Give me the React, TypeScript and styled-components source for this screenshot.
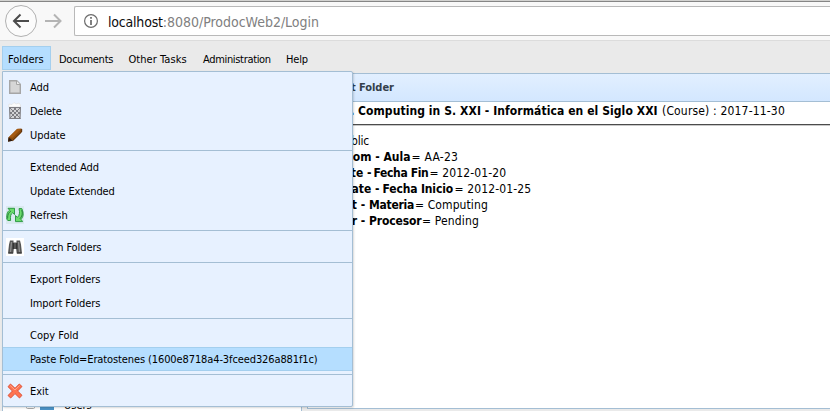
import React from "react";
import styled, { createGlobalStyle } from "styled-components";

const Global = createGlobalStyle`
  * { box-sizing: border-box; }
  body { margin: 0; background: #eaeaea; overflow: hidden; }
`;

const Page = styled.div`
  position: relative;
  display: flex;
  flex-direction: column;
  height: 411px;
  overflow: hidden;
  background: #eaeaea;
  color: #000;
  font-family: "DejaVu Sans Condensed", "DejaVu Sans", sans-serif;
  font-size: 11px;
  white-space: pre;
`;

const BrowserBar = styled.header`
  display: flex;
  flex: none;
  align-items: flex-start;
  height: 41px;
  padding-left: 4px;
  border-top: 1px solid #d2d2d0;
  border-bottom: 1px solid #dcdcdc;
  background: #f8f8f8;
  box-shadow: inset 0 1px #858585;
`;

const NavIcons = styled.svg`
  flex: none;
  width: 70px;
  height: 39px;
`;

const AddressField = styled.div`
  display: flex;
  flex: 1;
  align-items: center;
  height: 30px;
  margin-top: 5px;
  padding: 2px 0 0 8px;
  border: 1px solid #b9b9b9;
  border-right: 0;
  border-radius: 2px 0 0 2px;
  background: #fff;
  color: #808080;
  font-size: 14px;
`;

const InfoIcon = styled.svg`
  width: 16px;
  height: 16px;
  margin: -2px 9px 0 0;
`;

const Host = styled.span`
  color: #0c0c0d;
  letter-spacing: -0.2px;
`;

const UrlRest = styled.span`
  letter-spacing: -0.02px;
`;

const MenuBar = styled.nav`
  display: flex;
  flex: none;
  align-items: flex-start;
  gap: 2px;
  height: 32px;
  padding: 5px 0 0 2px;
`;

const MenuTitle = styled.div<{ $width: number; $track?: number; $open?: boolean }>`
  width: ${(p) => p.$width}px;
  height: 24px;
  padding-left: 5px;
  border: 1px solid ${(p) => (p.$open ? "#a4cfee" : "transparent")};
  background: ${(p) => (p.$open ? "#b5deff" : "transparent")};
  line-height: 25px;
  letter-spacing: ${(p) => p.$track ?? 0}px;
`;

const Workspace = styled.div`
  display: flex;
  flex: 1;
  gap: 5px;
  min-height: 0;
`;

const TreePanel = styled.aside`
  display: flex;
  align-items: flex-end;
  width: 300px;
  margin-left: 2px;
  padding: 0 0 0 22px;
  border: 1px solid #a4bed4;
  border-bottom: 0;
  background: #fff;
`;

const TreeRow = styled.div`
  display: flex;
  align-items: center;
  height: 14px;
  margin-bottom: -2px;
  line-height: 14px;
`;

const TreeIcons = styled.svg`
  width: 39px;
  height: 14px;
`;

const DetailPanel = styled.main`
  flex: 1;
  height: 336px;
  border: 1px solid #a4bed4;
  border-right: 0;
  background: #fff;
`;

const PanelHeader = styled.h1`
  display: flex;
  height: 28px;
  margin: 0;
  border-bottom: 1px solid #a4bed4;
  background: linear-gradient(#e2efff, #d3e7ff);
  color: #34404b;
  font-size: 11px;
  line-height: 28px;
  letter-spacing: -0.05px;
`;

const Line = styled.div`
  display: flex;
  height: 16px;
  font-size: 12px;
  line-height: 16px;
`;

const Summary = styled(Line)`
  height: 23px;
  line-height: 18px;
  border-bottom: 1px solid #4c4c4c;
  box-shadow: 0 1px #c8c8c8;
`;

const Fields = styled.div`
  padding-top: 8px;
`;

const Lead = styled.b<{ $width: number }>`
  flex: none;
  width: ${(p) => p.$width}px;
  text-align: right;
`;

const PlainLead = styled(Lead)`
  font-weight: 400;
  letter-spacing: -0.2px;
`;

const Strong = styled.b<{ $width: number; $track?: number }>`
  flex: none;
  width: ${(p) => p.$width}px;
  letter-spacing: ${(p) => p.$track ?? 0}px;
`;

const Value = styled.span<{ $track?: number }>`
  letter-spacing: ${(p) => p.$track ?? 0}px;
`;

const Dropdown = styled.div`
  position: absolute;
  left: 2px;
  top: 71px;
  width: 351px;
  height: 336px;
  padding: 3px 0;
  border: 1px solid #a4bed4;
  border-radius: 0 2px 2px 2px;
  background: #e7f1ff;
  box-shadow: 1px 1px 2px rgba(0, 0, 0, 0.15);
`;

const Item = styled.div<{ $active?: boolean; $track?: number }>`
  display: flex;
  align-items: center;
  height: 24px;
  padding-left: 3px;
  border: solid ${(p) => (p.$active ? "#a4cfee" : "transparent")};
  border-width: 1px 0;
  background: ${(p) => (p.$active ? "#b5deff" : "transparent")};
  letter-spacing: ${(p) => p.$track ?? 0}px;
`;

const IconSlot = styled.span`
  flex: none;
  width: 24px;
  height: 18px;
`;

const Glyph = styled.svg`
  display: block;
  width: 18px;
  height: 18px;
`;

const Rule = styled.div`
  height: 8px;
  border-top: 3px solid transparent;
  background: linear-gradient(#a4bed4, #a4bed4) 0 0 / 100% 1px no-repeat;
`;

const PageIcon = () => (
  <Glyph viewBox="0 0 18 18">
    <path d="M3.700 2.700h7l3.600 3.600v9h-10.600z" fill="#d6d6d6" stroke="#a6a6a6" strokeWidth="1.400" />
    <path d="M10.500 2.700v3.800h3.800" fill="#ededed" stroke="#a6a6a6" />
  </Glyph>
);

const TrashIcon = () => (
  <Glyph viewBox="0 0 18 18">
    <path d="M2.500 5L3 2l3 .5L8 .5l2 1.500 3-1 1.500 2v2z" fill="#fbfbfb" stroke="#dedede" strokeWidth=".6" />
    <path d="M3 5h12l-.5 12h-11z" fill="#d4d4d6" />
    <path
      d="M3.500 5l.5 12M14.500 5L14 17M3.500 16.500h11M3 5.500h12M4 6l10 10M8 6l6 6M4 10l6 6M14 6L4 16M10 6l-6 6M14 10l-6 6"
      stroke="#7d7d82"
      fill="none"
    />
  </Glyph>
);

const CrayonIcon = () => (
  <Glyph viewBox="0 0 18 18">
    <path d="M2 15.600l.5-4L11 3l4.500-.5.500 3.300-9 9z" fill="#8a4b0d" />
    <path d="M3 11L11.500 2.800l3.500.2-8.500 8.700z" fill="#a65c14" />
    <path d="M2 15.800l.6-4.600 4.200 3.600z" fill="#2d1a0d" />
    <path d="M6.700 14.600l9-8.800V3" stroke="#572b05" fill="none" />
  </Glyph>
);

const RefreshIcon = () => (
  <Glyph viewBox="0 0 18 18">
    <path d="M0 0h18v18H0z" fill="#d9e9ef" />
    <g fill="#6bdc6b" stroke="#23933b" strokeWidth=".9" strokeLinejoin="round">
      <path d="M.8 13C.4 8 1.500 5.500 3.600 4.200L2 2.300h6.500V8.500L6.700 6.800C4.500 8 4.300 10 4.600 14.500H1.800z" />
      <path d="M13 2.600h2.800C18 7.500 17.400 11 15 13.300l1.600 2.300H9.500V9.500l1.900 1.800C13.600 9.500 14 6.500 13 2.600z" />
    </g>
    <path d="M1.600 12.500C1.600 8.500 2.600 6.500 5 5M15.700 4c1.200 3.500.5 6.500-2 9" stroke="#1e6d36" strokeWidth=".8" fill="none" />
  </Glyph>
);

const BinocularsIcon = () => (
  <Glyph viewBox="0 0 18 18">
    <path d="M0 0h18v18H0z" fill="#fff" />
    <path d="M4 2.500h3.500v2h3v-2H14l1 4 1 9h-5.300L10.200 11H7.800l-.5 4.500H2l1-9z" fill="#555" />
    <path d="M5.500 4l-1 10M12.500 4l1 10" stroke="#8e8e8e" strokeWidth="1.300" />
    <path d="M7.300 5v6M10.700 5v6M2.500 15H7M11 15h4.500" stroke="#303030" strokeWidth="1.200" />
  </Glyph>
);

const CrossIcon = () => (
  <Glyph viewBox="0 0 18 18">
    <path
      d="M4.500 2L9 6.300 13.300 2 16 4.500 11.600 9 16 13.300 13.500 16 9 11.600 4.700 16 2 13.500 6.400 9 2 4.700z"
      fill="#ff7350"
      stroke="#d94a30"
      strokeWidth=".9"
      strokeLinejoin="round"
    />
    <path d="M4.300 3.600L9 8l4.600-4.500" stroke="#ffa78d" fill="none" />
  </Glyph>
);

type Entry = "rule" | { label: string; icon?: React.ReactNode; active?: boolean; track?: number };

const entries: Entry[] = [
  { label: "Add", icon: <PageIcon /> },
  { label: "Delete", icon: <TrashIcon />, track: -0.15 },
  { label: "Update", icon: <CrayonIcon />, track: -0.05 },
  "rule",
  { label: "Extended Add", track: -0.03 },
  { label: "Update Extended", track: -0.08 },
  { label: "Refresh", icon: <RefreshIcon />, track: 0.1 },
  "rule",
  { label: "Search Folders", icon: <BinocularsIcon />, track: -0.1 },
  "rule",
  { label: "Export Folders", track: -0.07 },
  { label: "Import Folders", track: -0.1 },
  "rule",
  { label: "Copy Fold" },
  { label: "Paste Fold=Eratostenes (1600e8718a4-3fceed326a881f1c)", active: true, track: -0.11 },
  "rule",
  { label: "Exit", icon: <CrossIcon /> },
];

const fields = [
  { lead: "Classroom - ", leadWidth: 75.5, name: "Aula", width: 28, value: "= AA-23", track: 0.25 },
  { lead: "End Date - ", leadWidth: 65.5, name: "Fecha Fin", width: 56, nameTrack: -0.35, value: "= 2012-01-20", track: 0.12 },
  { lead: "Start Date - ", leadWidth: 74.5, name: "Fecha Inicio", width: 72, nameTrack: -0.15, value: "= 2012-01-25", track: 0.12 },
  { lead: "Subject - ", leadWidth: 61, name: "Materia", width: 46, nameTrack: -0.25, value: "= Computing", track: 0.1 },
  { lead: "Teacher - ", leadWidth: 61, name: "Procesor", width: 53, nameTrack: -0.15, value: "= Pending", track: 0.15 },
];

export default function App() {
  return (
    <Page>
      <Global />
      <BrowserBar>
        <NavIcons viewBox="0 0 70 39" fill="none">
          <circle cx="17" cy="20" r="15.500" fill="#fbfbfb" stroke="#b1b1b1" />
          <path d="M25 20H10M16.500 13.500L10 20l6.500 6.500" stroke="#4c4c4c" strokeWidth="2" />
          <path d="M41 20h15M50 13.500l6.500 6.500-6.500 6.500" stroke="#b4b4b4" strokeWidth="2" />
        </NavIcons>
        <AddressField>
          <InfoIcon viewBox="0 0 16 16">
            <circle cx="8" cy="8" r="6.400" fill="none" stroke="#6c6c6c" strokeWidth="1.200" />
            <path d="M7.200 4h1.600v1.700H7.200zM7.200 7h1.600v5H7.200z" fill="#606060" />
          </InfoIcon>
          <Host>localhost</Host>
          <UrlRest>:8080/ProdocWeb2/Login</UrlRest>
        </AddressField>
      </BrowserBar>
      <MenuBar>
        <MenuTitle $width={49} $open>Folders</MenuTitle>
        <MenuTitle $width={67.5} $track={-0.25}>Documents</MenuTitle>
        <MenuTitle $width={72.5} $track={0.05}>Other Tasks</MenuTitle>
        <MenuTitle $width={81} $track={-0.33}>Administration</MenuTitle>
        <MenuTitle $width={40} $track={-0.2}>Help</MenuTitle>
      </MenuBar>
      <Workspace>
        <TreePanel>
          <TreeRow>
            <TreeIcons viewBox="0 0 39 14">
              <rect x="1.500" y="1.500" width="8" height="8" rx="1" fill="#fff" stroke="#a8a8a8" />
              <path d="M15 1h5l1 2h8v8H15z" fill="#4b93c7" />
            </TreeIcons>
            Users
          </TreeRow>
        </TreePanel>
        <DetailPanel>
          <PanelHeader>
            <Lead $width={51}>Current </Lead>
            <span>Folder</span>
          </PanelHeader>
          <Summary>
            <Lead $width={50}>. </Lead>
            <Strong $width={304} $track={0.08}>Computing in S. XXI - Informática en el Siglo XXI</Strong>
            <Value $track={0.17}>(Course) : 2017-11-30</Value>
          </Summary>
          <Fields>
            <Line>
              <PlainLead $width={61}>Public</PlainLead>
            </Line>
            {fields.map((f) => (
              <Line key={f.name}>
                <Lead $width={f.leadWidth}>{f.lead}</Lead>
                <Strong $width={f.width} $track={f.nameTrack}>{f.name}</Strong>
                <Value $track={f.track}>{f.value}</Value>
              </Line>
            ))}
          </Fields>
        </DetailPanel>
      </Workspace>
      <Dropdown>
        {entries.map((e, i) =>
          e === "rule" ? (
            <Rule key={i} />
          ) : (
            <Item key={i} $active={e.active} $track={e.track}>
              <IconSlot>{e.icon}</IconSlot>
              {e.label}
            </Item>
          ),
        )}
      </Dropdown>
    </Page>
  );
}
